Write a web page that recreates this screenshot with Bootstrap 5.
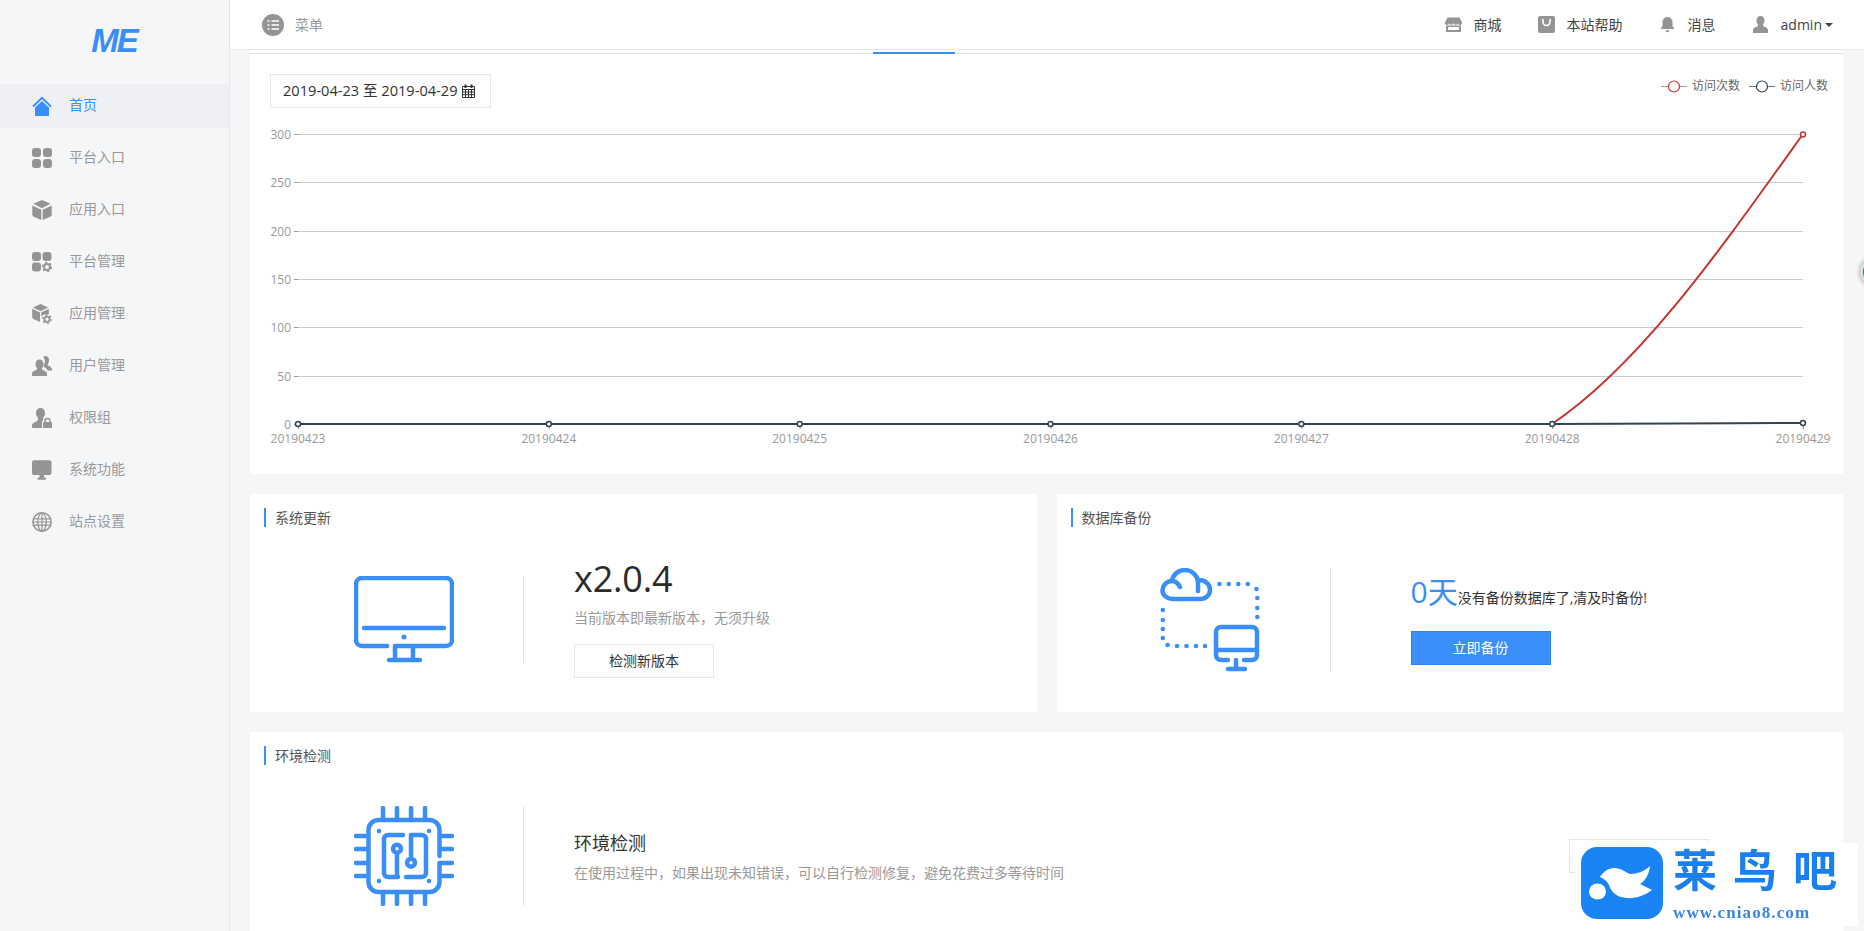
<!DOCTYPE html>
<html lang="zh-CN">

<head>
  <meta charset="UTF-8">
  <meta name="viewport" content="width=device-width, initial-scale=1.0">
  <title>首页</title>
  <link rel="stylesheet" href="https://cdn.jsdelivr.net/npm/bootstrap@5.3.0/dist/css/bootstrap.min.css">
  <style>
    body {
      font-family: "Open Sans", "Noto Sans CJK SC", sans-serif;
      font-size: 14px;
      color: #333;
      background: #f5f6f8;
      height: 100vh;
      overflow: hidden;
    }

    .side-panel {
      width: 230px;
      flex: 0 0 230px;
      border-right: 1px solid #e4e6ea;
      height: 100vh;
    }

    .brand-box {
      height: 84px;
      padding-top: 24px;
      text-align: center;
      color: #3a8ef8;
      font: italic 700 33px/34px "Liberation Sans", sans-serif;
      letter-spacing: -2px;
      padding-right: 1px;
    }

    .side-nav {
      gap: 8px;
    }

    .side-link {
      height: 44px;
      padding-left: 32px;
      padding-bottom: 4px;
      gap: 17px;
      color: #999;
      text-decoration: none;
    }

    .side-link.on {
      background: #eff0f6;
      color: #3a8ef8;
    }

    .side-ic {
      width: 20px;
      height: 20px;
      margin-top: 4px;
      fill: #949494;
      flex: none;
    }

    .on .side-ic {
      fill: #3a8ef8;
    }

    .main-wrap {
      min-width: 0;
      height: 100vh;
      overflow: hidden;
    }

    .top-bar {
      height: 50px;
      border-bottom: 1px solid #e8e8e8;
      padding: 0 31px 0 32px;
    }

    .menu-ball {
      width: 22px;
      height: 22px;
      margin-right: 11px;
    }

    .menu-word {
      color: #999;
    }

    .top-links {
      gap: 36px;
      color: #444;
    }

    .top-links span.lnk {
      gap: 12px;
    }

    .top-ic {
      width: 17px;
      height: 17px;
      fill: #949494;
      flex: none;
    }

    .caret-mark {
      width: 0;
      height: 0;
      margin-left: 3px;
      border-top: 4px solid #444;
      border-left: 4px solid transparent;
      border-right: 4px solid transparent;
    }

    .page-body {
      padding: 0 21px 0 20px;
    }

    .pane {
      background: #fff;
    }

    .tab-strip {
      height: 4px;
      padding-top: 2px;
      border-bottom: 1px solid #ddd;
    }

    .tab-mark {
      width: 82px;
      height: 2px;
      margin-left: 623px;
      background: #3a8ef8;
    }

    .chart-head {
      padding: 20px 15px 0 20px;
    }

    .date-box {
      height: 34px;
      width: 221px;
      border: 1px solid #e5e5e5;
      padding-left: 12px;
      font-size: 14.6px;
      color: #333;
      gap: 5px;
    }

    .legend-row {
      font-size: 12px;
      color: #666;
      height: 24px;
      gap: 9px;
    }

    .legend-key {
      width: 26px;
      height: 13px;
      margin-right: -4px;
    }

    .chart-svg {
      display: block;
      width: 1593px;
      height: 366px;
    }

    .chart-svg text {
      font-size: 12px;
      fill: #999;
    }

    .gap-row {
      --bs-gutter-x: 20px;
      margin-top: 20px;
    }

    .pane-title {
      height: 19px;
      margin-left: 14px;
      padding-left: 9px;
      border-left: 2px solid #3a8ef8;
      line-height: 20px;
      color: #555;
    }

    .info-pane {
      height: 218px;
      padding-top: 14px;
    }

    .info-row {
      height: 119px;
      margin-top: 33px;
    }

    .ic-cell {
      width: 273px;
      flex: none;
      padding-left: 104px;
    }

    .big-ic {
      display: block;
      width: 100px;
      fill: none;
      stroke: #3a8ef8;
      stroke-width: 4.5;
      stroke-linecap: round;
      stroke-linejoin: round;
    }

    .big-ic .dotf {
      fill: #3a8ef8;
      stroke: none;
    }

    .split-line {
      width: 1px;
      flex: none;
      background: #e3e3e3;
    }

    .txt-cell {
      padding-left: 50px;
    }

    .update-cell {
      padding-bottom: 4px;
    }

    .backup-cell {
      padding-left: 80px;
      padding-bottom: 3px;
    }

    .days-line {
      margin-bottom: 19px;
    }

    .ver-num {
      font-size: 36px;
      line-height: 42px;
      color: #2b2b2b;
      letter-spacing: -.2px;
    }

    .sub-word {
      color: #999;
      line-height: 20px;
    }

    .plain-btn {
      width: 140px;
      height: 34px;
      border: 1px solid #e5e5e5;
      background: #fff;
      color: #333;
      font-size: 14px;
      padding: 0;
      border-radius: 0;
    }

    .blue-btn {
      width: 140px;
      height: 34px;
      border: 1px solid #2f84f0;
      background: #3a8ef8;
      color: #fff;
      font-size: 14px;
      padding: 0;
      border-radius: 0;
    }

    .days-num {
      font-size: 30px;
      line-height: 40px;
      color: #3a8ef8;
    }

    .env-pane {
      height: 400px;
      margin-top: 20px;
      padding-top: 14px;
    }

    .env-row {
      height: 100px;
      margin-top: 41px;
    }

    .env-title {
      font-size: 18px;
      line-height: 26px;
      color: #333;
      margin-bottom: 7px;
    }

    .wm-box {
      position: fixed;
      left: 1575px;
      top: 843px;
      width: 283px;
      height: 83px;
      background: #fff;
      padding: 4px 0 0 6px;
      gap: 10px;
    }

    .wm-cn {
      font-size: 44px;
      line-height: 46px;
      font-weight: 700;
      letter-spacing: 16px;
      color: #1a80f0;
      white-space: nowrap;
    }

    .wm-url {
      font: 700 17px/20px "Liberation Serif", serif;
      letter-spacing: 1.1px;
      color: #3a86e0;
      margin-top: 10px;
    }

    .edge-knob {
      position: fixed;
      left: 1860px;
      top: 257px;
      width: 30px;
      height: 30px;
      border-radius: 50%;
      background: #2c7a5e;
      border: 3px solid #ddd;
      box-shadow: 0 0 4px #999;
    }
  </style>
</head>

<body>
  <div class="d-flex">
    <aside class="side-panel">
      <div class="brand-box">ME</div>
      <nav class="side-nav d-flex flex-column">
        <a class="side-link on d-flex align-items-center" href="#">
          <svg class="side-ic" viewBox="0 0 20 20">
            <path d="M3 11.5 10 5l7 6.5V19a1 1 0 0 1-1 1H4a1 1 0 0 1-1-1z" />
            <path d="M1 10.5 10 1.8l9 8.7" fill="none" stroke="#3a8ef8" stroke-width="1.8" />
          </svg>首页</a>
        <a class="side-link d-flex align-items-center" href="#">
          <svg class="side-ic" viewBox="0 0 20 20">
            <rect width="9" height="9" rx="3" />
            <rect x="11" width="9" height="9" rx="3" />
            <rect y="11" width="9" height="9" rx="3" />
            <rect x="11" y="11" width="9" height="9" rx="3" />
          </svg>平台入口</a>
        <a class="side-link d-flex align-items-center" href="#">
          <svg class="side-ic" viewBox="0 0 20 20">
            <path d="M10 0l8.6 3.8L10 8.2 1.4 3.8z" />
            <path d="M.3 5.4l9 4.4V20L1.2 16.4a1.5 1.5 0 0 1-.9-1.4z" />
            <path d="M19.7 5.4l-9 4.4V20l8.1-3.6a1.5 1.5 0 0 0 .9-1.4z" />
          </svg>应用入口</a>
        <a class="side-link d-flex align-items-center" href="#">
          <svg class="side-ic" viewBox="0 0 20 20">
            <rect width="9" height="9" rx="3" />
            <rect x="10.5" width="9" height="9" rx="3" />
            <rect y="10.5" width="9" height="9" rx="3" />
            <circle cx="15" cy="15" r="3" fill="none" stroke="#949494" stroke-width="2" />
            <circle cx="15" cy="15" r="4.6" fill="none" stroke="#949494" stroke-width="1.4" stroke-dasharray="2 2.8" />
          </svg>平台管理</a>
        <a class="side-link d-flex align-items-center" href="#">
          <svg class="side-ic" viewBox="0 0 20 20">
            <path d="M8.5 0l7.6 3.4-7.6 3.9L.9 3.4z" />
            <path d="M.2 4.800l7.800 3.800V18l-7-3.200a1.400 1.400 0 0 1-.8-1.300z" />
            <path d="M16.800 4.800 9.200 8.600v3.600l3-1.600h4.600z" />
            <circle cx="15" cy="15.2" r="2.6" fill="none" stroke="#949494" stroke-width="1.8" />
            <circle cx="15" cy="15.2" r="4.2" fill="none" stroke="#949494" stroke-width="1.3" stroke-dasharray="2 2.4" />
          </svg>应用管理</a>
        <a class="side-link d-flex align-items-center" href="#">
          <svg class="side-ic" viewBox="0 0 20 20">
            <path d="M13.500 0c2.200 0 3.600 1.900 3.600 4.300 0 1.600-.6 3-1.400 3.900v1.100c.9.6 4.300 1.700 4.300 4v1.200h-4.400c-.5-2-2.400-3-3.900-3.800v-1.500c.9-1.100 1.200-2.500 1.200-3.900 0-1.700-.7-3-1.600-4C11.900.4 12.600 0 13.500 0z" />
            <path d="M7.500 3.500c2.500 0 4 2 4 4.600 0 1.700-.6 3.100-1.500 4.100v1.400c1 .7 5 1.700 5 4v1.800c0 .3-.3.6-.6.6H.6c-.3 0-.6-.3-.6-.6v-1.800c0-2.300 4-3.300 5-4v-1.400c-.9-1-1.500-2.400-1.500-4.100 0-2.600 1.500-4.600 4-4.600z" />
          </svg>用户管理</a>
        <a class="side-link d-flex align-items-center" href="#">
          <svg class="side-ic" viewBox="0 0 20 20">
            <path d="M8.500 0c2.800 0 4.500 2.200 4.500 5 0 2-.7 3.500-1.800 4.600V11l.5.200c-.6.500-1 1.300-1 2.100H10V20H.8c-.4 0-.8-.3-.8-.8v-1.600c0-2.500 4.200-3.900 5.800-5V9.600C4.700 8.500 4 7 4 5c0-2.800 1.700-5 4.500-5z" />
            <rect x="11" y="14" width="9" height="6" rx="1" />
            <path d="M13 14.500V13a2.500 2.500 0 0 1 5 0v1.500" fill="none" stroke="#949494" stroke-width="1.4" />
          </svg>权限组</a>
        <a class="side-link d-flex align-items-center" href="#">
          <svg class="side-ic" viewBox="0 0 20 20">
            <rect y=".2" width="19.5" height="14.8" rx="2" />
            <rect x="7.5" y="15" width="4.5" height="3" />
            <rect x="5.5" y="17.500" width="8.5" height="2.3" rx="1" />
          </svg>系统功能</a>
        <a class="side-link d-flex align-items-center" href="#">
          <svg class="side-ic" viewBox="0 0 20 20">
            <circle cx="10" cy="10" r="9.200" fill="none" stroke="#949494" stroke-width="1.5" />
            <g fill="none" stroke="#949494" stroke-width="1.2">
              <ellipse cx="10" cy="10" rx="4.200" ry="9.200" />
              <path d="M10 1v18M2 6.800h16M2 13.200h16M1 10h18" />
            </g>
          </svg>站点设置</a>
      </nav>
    </aside>

    <div class="main-wrap flex-grow-1 d-flex flex-column">
      <header class="top-bar bg-white d-flex align-items-center justify-content-between flex-shrink-0">
        <div class="d-flex align-items-center">
          <svg class="menu-ball" viewBox="0 0 22 22">
            <circle cx="11" cy="11" r="11" fill="#949494" />
            <path d="M9.500 7H17M9.500 11H17M9.500 15H17" stroke="#fff" stroke-width="1.6" />
            <path d="M5.500 7H7.500M5.500 11H7.500M5.500 15H7.500" stroke="#fff" stroke-width="1.6" />
          </svg>
          <span class="menu-word">菜单</span>
        </div>
        <div class="top-links d-flex align-items-center">
          <span class="lnk d-flex align-items-center">
            <svg class="top-ic" viewBox="0 0 17 17">
              <path d="M2.500 1.500h12L17 6.500a2 2 0 0 1-4 .8 2.400 2.400 0 0 1-4.500 0 2.400 2.400 0 0 1-4.500 0A2 2 0 0 1 0 6.500z" />
              <path d="M1 9.500h15V16H1zM3 11v3h11v-3z" fill-rule="evenodd" />
            </svg>商城</span>
          <span class="lnk d-flex align-items-center">
            <svg class="top-ic" viewBox="0 0 17 17">
              <rect width="17" height="17" rx="2" />
              <path d="M5 3.500V6a3.500 3.500 0 0 0 7 0V3.500" fill="none" stroke="#fff" stroke-width="1.6" stroke-linecap="round" />
            </svg>本站帮助</span>
          <span class="lnk d-flex align-items-center">
            <svg class="top-ic" viewBox="0 0 17 17">
              <path d="M8.500 1a5 5 0 0 1 5 5v4l2 3H1.500l2-3V6a5 5 0 0 1 5-5z" />
              <path d="M6.500 14.300h4a2 2 0 0 1-4 0z" />
            </svg>消息</span>
          <span class="lnk d-flex align-items-center">
            <svg class="top-ic" viewBox="0 0 17 17">
              <path d="M8.500 0c2.500 0 4 2 4 4.500 0 1.800-.7 3.100-1.500 4V10c1.500.9 5 1.500 5 4.500V17H1v-2.500c0-3 3.500-3.600 5-4.500V8.500c-.8-.9-1.500-2.200-1.500-4C4.500 2 6 0 8.500 0z" />
            </svg>
            <span class="d-flex align-items-center">admin<i class="caret-mark"></i></span></span>
        </div>
      </header>

      <div class="page-body flex-shrink-0">
        <section class="pane">
          <div class="tab-strip">
            <div class="tab-mark"></div>
          </div>
          <div class="chart-head d-flex justify-content-between align-items-start">
            <div class="date-box d-flex align-items-center">2019-04-23 至 2019-04-29
              <svg width="13" height="14" viewBox="0 0 13 14">
                <path d="M.5 2.500h12v11H.5zM.5 5.500h12M.5 8h12M.5 10.700h12M3.500 5.500v8M6.500 5.500v8M9.500 5.500v8" fill="none" stroke="#333" />
                <rect x="2.500" y=".5" width="2" height="3.5" fill="#333" />
                <rect x="8.500" y=".5" width="2" height="3.5" fill="#333" />
              </svg>
            </div>
            <div class="legend-row d-flex align-items-center">
              <svg class="legend-key" viewBox="0 0 26 13">
                <path d="M0 6.500h26" stroke="#c23531" stroke-opacity=".6" />
                <circle cx="13" cy="6.500" r="5.500" fill="#fff" stroke="#c23531" stroke-width="1.2" />
              </svg>
              <span>访问次数</span>
              <svg class="legend-key" viewBox="0 0 26 13">
                <path d="M0 6.500h26" stroke="#2f4554" stroke-opacity=".7" />
                <circle cx="13" cy="6.500" r="5.500" fill="#fff" stroke="#2f4554" stroke-width="1.2" />
              </svg>
              <span>访问人数</span>
            </div>
          </div>
          <svg class="chart-svg" id="chart" viewBox="250 108 1593 366"></svg>
        </section>

        <div class="row gap-row">
          <div class="col-6">
            <section class="pane info-pane">
              <div class="pane-title">系统更新</div>
              <div class="info-row d-flex align-items-center">
                <div class="ic-cell">
                  <svg class="big-ic" viewBox="0 0 100 87" height="87">
                    <path d="M33 70H8a6 6 0 0 1-6-6V8a6 6 0 0 1 6-6h84a6 6 0 0 1 6 6v56a6 6 0 0 1-6 6H41v14M59 70v14M35 84h31M10 52h80" />
                    <circle class="dotf" cx="50" cy="61" r="2.5" />
                  </svg>
                </div>
                <div class="split-line" style="height:87px"></div>
                <div class="txt-cell update-cell">
                  <div class="ver-num">x2.0.4</div>
                  <div class="sub-word mt-2 mb-3">当前版本即最新版本，无须升级</div>
                  <button class="btn plain-btn">检测新版本</button>
                </div>
              </div>
            </section>
          </div>
          <div class="col-6">
            <section class="pane info-pane">
              <div class="pane-title">数据库备份</div>
              <div class="info-row d-flex align-items-center">
                <div class="ic-cell" style="padding-left:103px">
                  <svg class="big-ic" viewBox="0 0 100 104" height="104">
                    <path d="M20 19c-2-4-5-6-8-6-6 0-9.500 5-9.500 9.500S7 31 12 31h28c6 0 10-4 10-9 0-6-5-10-11-10M12 13c1-7 7-11 13-11 7 0 13 6 13 13v8" />
                    <path d="M68 92h-7a5 5 0 0 1-5-5V64a5 5 0 0 1 5-5h31a5 5 0 0 1 5 5v23a5 5 0 0 1-5 5h-8M56 82h41M76 92v9M68 101h17" />
                    <g id="dotGroup"></g>
                  </svg>
                </div>
                <div class="split-line" style="height:104px"></div>
                <div class="txt-cell backup-cell">
                  <div class="days-line d-flex align-items-baseline"><span class="days-num">0天</span><span>没有备份数据库了,清及时备份!</span></div>
                  <button class="btn blue-btn">立即备份</button>
                </div>
              </div>
            </section>
          </div>
        </div>

        <section class="pane env-pane">
          <div class="pane-title">环境检测</div>
          <div class="env-row d-flex align-items-center">
            <div class="ic-cell">
              <svg class="big-ic" viewBox="0 0 100 100" height="100">
                <path d="M85.500 50V24a10 10 0 0 0-10-10h-51a10 10 0 0 0-10 10v52a10 10 0 0 0 10 10h51a10 10 0 0 0 10-10V57" />
                <path d="M29 2v12M43 2v12M57 2v12M71 2v12M29 86v12M43 86v12M57 86v12M71 86v12M2 30h12M2 43h12M2 57h12M2 70h12M86 30h12M86 43h12M86 57h12M86 70h12" />
                <path d="M49 29H34a4 4 0 0 0-4 4v34a4 4 0 0 0 4 4h10M57 29h11a4 4 0 0 1 4 4v34a4 4 0 0 1-4 4H52M57 29v21M43 48v23" />
                <circle cx="43" cy="42.7" r="4" />
                <circle cx="57" cy="56.7" r="4" />
                <circle class="dotf" cx="25" cy="25" r="2.3" />
                <circle class="dotf" cx="75" cy="25" r="2.3" />
                <circle class="dotf" cx="25" cy="75" r="2.3" />
                <circle class="dotf" cx="75" cy="75" r="2.3" />
              </svg>
            </div>
            <div class="split-line" style="height:100px"></div>
            <div class="txt-cell">
              <div class="env-title">环境检测</div>
              <div class="sub-word">在使用过程中，如果出现未知错误，可以自行检测修复，避免花费过多等待时间</div>
            </div>
            <button class="btn plain-btn ms-auto" style="margin-right:134px"></button>
          </div>
        </section>
      </div>
    </div>
  </div>

  <div class="wm-box d-flex">
    <svg width="82" height="72" viewBox="0 0 82 72" style="flex:none">
      <rect width="82" height="72" rx="16" fill="#1a84f5" />
      <path d="M19 30c3-5 8-9 14-9 7 0 11 4 16 6 7 0 15-3 20-8-1 9-5 15-10 18 4 2 8 4 12 6-9 7-21 10-31 7-6-2-10-6-12-12-2-4-5-6-9-8z" fill="#fff" />
      <ellipse cx="16.5" cy="44.5" rx="8.5" ry="8" fill="#fff" />
    </svg>
    <div>
      <div class="wm-cn">莱鸟吧</div>
      <div class="wm-url">www.cniao8.com</div>
    </div>
  </div>
  <div class="edge-knob"></div>

  <script>
    // chart drawn in page coordinates, viewBox matches the card position
    const ns = "http://www.w3.org/2000/svg";
    const x0 = 298, stepX = 250.83, y0 = 424, stepY = 48.33;
    const chart = document.getElementById("chart");

    function add(parent, tag, attrs, txt) {
      const el = document.createElementNS(ns, tag);
      Object.keys(attrs).forEach(k => el.setAttribute(k, attrs[k]));
      if (txt !== undefined) el.textContent = txt;
      parent.appendChild(el);
      return el;
    }

    [0, 50, 100, 150, 200, 250, 300].forEach((v, i) => {
      const y = Math.round(y0 - i * stepY) + .5;
      if (i > 0) add(chart, "path", { d: `M298 ${y}H1803`, stroke: "#ccc", fill: "none" });
      add(chart, "path", { d: `M294 ${y}H298`, stroke: "#999" });
      add(chart, "text", { x: 291, y: y + 4, "text-anchor": "end" }, v);
    });

    const days = ["20190423", "20190424", "20190425", "20190426", "20190427", "20190428", "20190429"];
    days.forEach((d, i) => {
      const x = x0 + i * stepX;
      add(chart, "path", { d: `M${x + .5} 424V429`, stroke: "#999" });
      add(chart, "text", { x: x, y: 443, "text-anchor": "middle" }, d);
    });

    add(chart, "path", { d: "M298 424H1552C1640 365 1720 250 1803 134", stroke: "#c23531", "stroke-width": 2, fill: "none" });
    add(chart, "circle", { cx: 1803, cy: 134.5, r: 2.5, fill: "#fff", stroke: "#c23531", "stroke-width": 1.5 });
    add(chart, "path", { d: "M298 424H1552C1640 424 1720 423 1803 423", stroke: "#2f4554", "stroke-width": 2, fill: "none" });
    days.forEach((d, i) => {
      add(chart, "circle", { cx: x0 + i * stepX, cy: i === 6 ? 423 : 424, r: 2.5, fill: "#fff", stroke: "#2f4554", "stroke-width": 1.5 });
    });

    // dotted path around the backup icon
    const dots = [[59.4, 16], [68.8, 16], [78.3, 16], [87.8, 16], [96.5, 21], [97.3, 30], [97.3, 40], [97.3, 49],
      [2.8, 42], [2.8, 52], [2.8, 61], [2.8, 70], [7.6, 77], [17, 78], [26.5, 78], [36, 78], [45, 78]];
    const group = document.getElementById("dotGroup");
    dots.forEach(p => add(group, "circle", { class: "dotf", cx: p[0], cy: p[1], r: 2.3 }));
  </script>
  <script src="https://cdn.jsdelivr.net/npm/bootstrap@5.3.0/dist/js/bootstrap.bundle.min.js"></script>
</body>

</html>
